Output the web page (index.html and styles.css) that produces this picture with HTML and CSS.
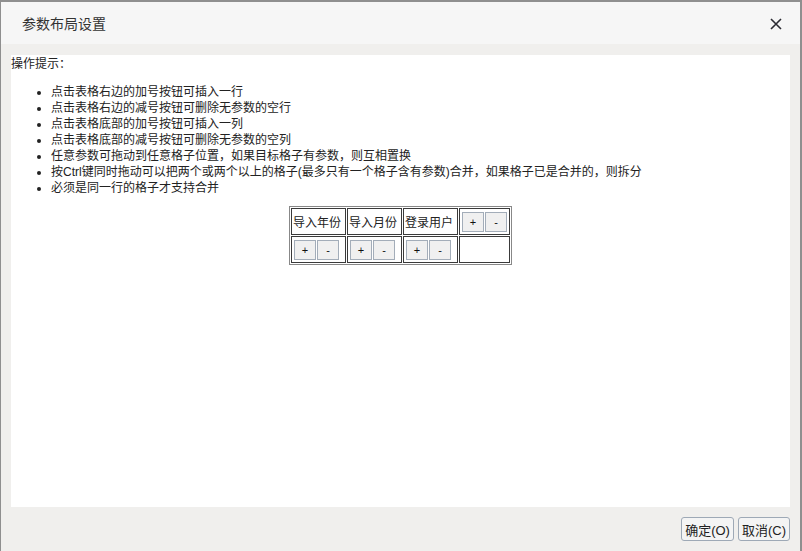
FILE: index.html
```html
<!DOCTYPE html>
<html lang="zh-CN">
<head>
  <meta charset="UTF-8">
  <title>参数布局设置</title>
  <link rel="stylesheet" href="styles.css">
</head>
<body>

  <!-- Dialog window -->
  <div class="dialog">
    <div class="dialog-header">
      <span class="dialog-title">参数布局设置</span>
      <span class="dialog-close">
        <svg width="12" height="12" viewBox="0 0 12 12">
          <path d="M1 1 L11 11 M11 1 L1 11" stroke="#2b2b33" stroke-width="1.6" fill="none"/>
        </svg>
      </span>
    </div>

    <div class="dialog-body">
      <div class="panel">
        <p class="tips-title">操作提示：</p>
        <ul class="tips">
          <li>点击表格右边的加号按钮可插入一行</li>
          <li>点击表格右边的减号按钮可删除无参数的空行</li>
          <li>点击表格底部的加号按钮可插入一列</li>
          <li>点击表格底部的减号按钮可删除无参数的空列</li>
          <li>任意参数可拖动到任意格子位置，如果目标格子有参数，则互相置换</li>
          <li>按Ctrl键同时拖动可以把两个或两个以上的格子(最多只有一个格子含有参数)合并，如果格子已是合并的，则拆分</li>
          <li>必须是同一行的格子才支持合并</li>
        </ul>

        <table class="layout" id="layout"></table>
      </div>
    </div>

    <div class="dialog-footer">
      <button class="dlg-btn">确定(O)</button>
      <button class="dlg-btn">取消(C)</button>
    </div>
  </div>

  <script>
    const layout = document.getElementById('layout');
    const params = ["导入年份", "导入月份", "登录用户"];

    function btnPair() {
      return '<span class="pair"><button class="mini">+</button><button class="mini">-</button></span>';
    }

    function drawLayout() {
      let row1 = "<tr>";
      params.forEach(p => { row1 += `<td class="param">${p}</td>`; });
      row1 += `<td class="ctrl">${btnPair()}</td></tr>`;

      let row2 = "<tr>";
      params.forEach(() => { row2 += `<td class="param">${btnPair()}</td>`; });
      row2 += '<td class="ctrl"></td></tr>';

      layout.innerHTML = row1 + row2;
    }

    drawLayout();
  </script>
</body>
</html>
```

FILE: styles.css
```css
* {
  box-sizing: border-box;
}

body {
  margin: 0;
  font-family: "Liberation Sans", "Noto Sans CJK SC", sans-serif;
  font-size: 12px;
  color: #222;
  background: #f0efed;
}

.dialog {
  width: 802px;
  height: 551px;
  display: flex;
  flex-direction: column;
  border-top: 2px solid #8f8f8f;
  border-left: 1px solid #8f8f8f;
  border-right: 2px solid #8f8f8f;
  background: #f0efed;
}

.dialog-header {
  height: 42px;
  flex-shrink: 0;
  display: flex;
  align-items: center;
  justify-content: space-between;
  padding: 0 18px 0 21px;
  background: #f6f6f6;
}

.dialog-title {
  font-size: 14px;
  color: #333;
}

.dialog-close {
  display: flex;
  margin-top: 1px;
}

.dialog-body {
  flex: 1;
  padding: 11px 10px 0 10px;
  display: flex;
}

.panel {
  flex: 1;
  height: 452px;
  background: #fff;
  padding-top: 1px;
}

.tips-title {
  margin: 0;
  line-height: 16px;
}

.tips {
  margin: 12px 0 0 0;
  padding-left: 40px;
  line-height: 16px;
}

.layout {
  margin: 10px auto 0;
  border: 1px solid #888;
  border-spacing: 1px;
}

.layout td {
  border: 1px solid #3a3a3a;
  height: 27px;
  padding: 0 1px;
  white-space: nowrap;
  text-align: left;
}

.layout td.param {
  width: 55px;
}

.layout td.ctrl {
  width: 51px;
}

.pair {
  display: flex;
  gap: 1px;
  padding-left: 1px;
}

.mini {
  width: 22px;
  height: 20px;
  margin: 0;
  padding: 0;
  border: 1px solid #a3adb9;
  background: #f0f0f0;
  font-family: "Liberation Sans", sans-serif;
  font-size: 11px;
  color: #111;
  line-height: 16px;
}

.dialog-footer {
  height: 44px;
  flex-shrink: 0;
  display: flex;
  justify-content: flex-end;
  align-items: flex-start;
  gap: 4px;
  padding: 10px 10px 0 0;
}

.dlg-btn {
  height: 24px;
  padding: 0 3px;
  margin: 0;
  border: 1px solid #9ea9b6;
  border-radius: 3px;
  background: #f4f4f4;
  font-family: "Liberation Sans", "Noto Sans CJK SC", sans-serif;
  font-size: 13px;
  color: #222;
}
```
